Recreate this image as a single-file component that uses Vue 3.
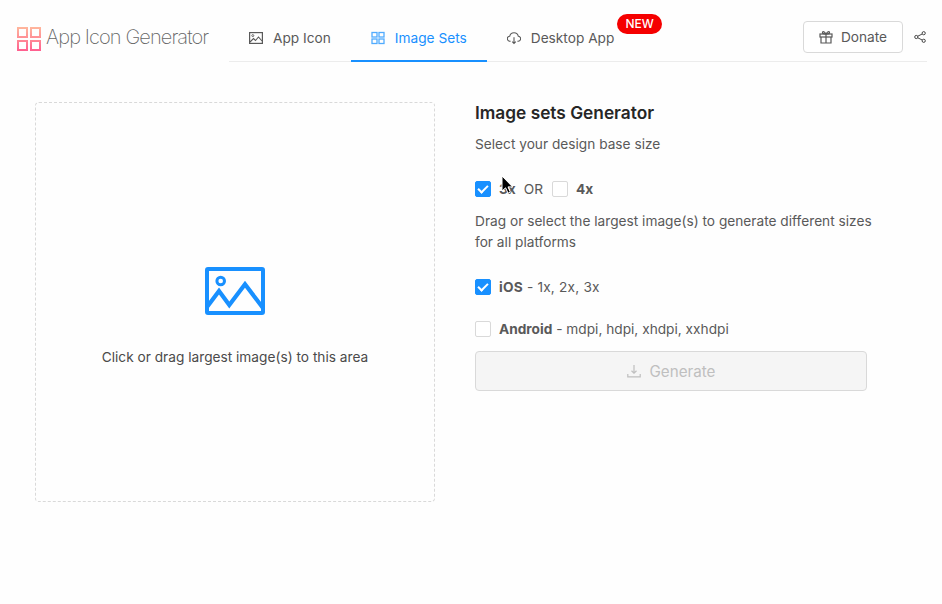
<script setup>
const tabs = [
  { label: 'App Icon', icon: 'picture' },
  { label: 'Image Sets', icon: 'grid', active: true },
  { label: 'Desktop App', icon: 'cloud', badge: 'NEW' },
]
</script>

<template>
  <div class="page">
    <header class="header">
      <div class="logo">
        <svg width="24" height="24" viewBox="0 0 24 24" fill="none" stroke="url(#lg)" stroke-width="2">
          <defs>
            <linearGradient id="lg" gradientUnits="userSpaceOnUse" x1="0" y1="0" x2="0" y2="24">
              <stop offset="0" stop-color="#ffb79c" />
              <stop offset="1" stop-color="#ff5f8f" />
            </linearGradient>
          </defs>
          <rect x="1" y="1" width="9" height="9" />
          <rect x="14" y="1" width="9" height="9" />
          <rect x="1" y="14" width="9" height="9" />
          <rect x="14" y="14" width="9" height="9" />
        </svg>
        <span class="logo-text">App Icon Generator</span>
      </div>
      <div class="nav">
        <div class="tabs">
          <div v-for="t in tabs" :key="t.label" class="tab" :class="{ active: t.active }">
            <svg v-if="t.icon === 'picture'" class="tab-icon" viewBox="0 0 14 14" fill="none" stroke="currentColor">
              <rect x="0.6" y="1.6" width="12.8" height="10.8" stroke-width="1.2" />
              <circle cx="3.8" cy="4.6" r="1" stroke-width="0.9" />
              <path d="M1 11 L4.5 7.5 L6.5 9.5 L9.5 6 L13 10" stroke-width="1.1" />
            </svg>
            <svg v-else-if="t.icon === 'grid'" class="tab-icon grid" viewBox="0 0 14 14" fill="none" stroke="currentColor" stroke-width="1.3">
              <rect x="1" y="1.5" width="5" height="4.5" />
              <rect x="8" y="1.5" width="5" height="4.5" />
              <rect x="1" y="8" width="5" height="4.5" />
              <rect x="8" y="8" width="5" height="4.5" />
            </svg>
            <svg v-else class="tab-icon" viewBox="0 0 14 14" fill="none" stroke="currentColor" stroke-width="1.1">
              <path d="M3.6 10.2 H3 A2.5 2.5 0 0 1 2.7 5.2 A4.4 4.4 0 0 1 11.3 5.2 A2.5 2.5 0 0 1 11 10.2 H10.4" />
              <path d="M7 6.2 V12.4 M5.2 10.6 L7 12.4 L8.8 10.6" />
            </svg>
            <span>{{ t.label }}</span>
            <span v-if="t.badge" class="badge">{{ t.badge }}</span>
          </div>
        </div>
        <button class="donate">
          <svg class="tab-icon" viewBox="0 0 14 14" fill="none" stroke="currentColor" stroke-width="1.2">
            <rect x="1" y="4" width="12" height="3" />
            <path d="M2 7 V13 H12 V7 M7 4 V13" />
            <path d="M7 4 C5 1 3 1.2 3.6 3 C3.8 3.7 5 4 7 4 C9 4 10.2 3.7 10.4 3 C11 1.2 9 1 7 4" />
          </svg>
          <span>Donate</span>
        </button>
        <svg class="share" viewBox="0 0 12 12" fill="none" stroke="#333" stroke-width="0.9">
          <circle cx="2.3" cy="6" r="1.6" />
          <circle cx="9.7" cy="2.2" r="1.6" />
          <circle cx="9.7" cy="9.8" r="1.6" />
          <path d="M3.8 5.2 L8.2 3 M3.8 6.8 L8.2 9" />
        </svg>
      </div>
    </header>

    <main class="main">
      <div class="drop">
        <svg class="drop-icon" viewBox="0 0 60 48" fill="none" stroke="#1890ff" stroke-width="4">
          <rect x="2" y="2" width="56" height="44" rx="1" />
          <circle cx="15.7" cy="14" r="3.8" stroke-width="3" />
          <path d="M2 40 L14 24 L24.3 38 L40 17.3 L58 41" stroke-width="4.2" />
        </svg>
        <p class="drop-text">Click or drag largest image(s) to this area</p>
      </div>

      <section class="panel">
        <h1 class="title">Image sets Generator</h1>
        <p class="sub">Select your design base size</p>
        <div class="row base">
          <span class="check on"></span><b class="lbl">3x</b>
          <span class="or">OR</span>
          <span class="check"></span><b class="lbl">4x</b>
        </div>
        <p class="desc">Drag or select the largest image(s) to generate different sizes<br />for all platforms</p>
        <div class="row ios">
          <span class="check on"></span><span class="lbl"><b>iOS</b> - 1x, 2x, 3x</span>
        </div>
        <div class="row android">
          <span class="check"></span><span class="lbl"><b>Android</b> - mdpi, hdpi, xhdpi, xxhdpi</span>
        </div>
        <button class="generate">
          <svg class="tab-icon" viewBox="0 0 14 14" fill="none" stroke="currentColor" stroke-width="1.2">
            <path d="M7 1 V9 M4.5 6.8 L7 9.2 L9.5 6.8" />
            <path d="M0.8 10 V12.8 H13.2 V10" />
          </svg>
          <span>Generate</span>
        </button>
      </section>
    </main>

    <svg class="cursor" width="13" height="20" viewBox="0 0 13 20">
      <path d="M1 1 V16 L4.6 12.8 L7 18.2 L9.4 17.2 L7 11.9 H11.6 Z" fill="#000" stroke="#fff" stroke-width="1" />
    </svg>
  </div>
</template>

<style scoped>
.page {
  position: relative;
  width: 942px;
  height: 604px;
  overflow: hidden;
  background: #fefefe;
  color: #595959;
  font-family: Inter, "Liberation Sans", sans-serif;
  font-size: 13.7px;
}
.header {
  display: flex;
  height: 62px;
}
.logo {
  width: 229px;
  display: flex;
  align-items: center;
  gap: 5px;
  padding: 15px 0 0 17px;
  box-sizing: border-box;
}
.logo-text {
  font-size: 20px;
  font-weight: 200;
  color: #666;
  letter-spacing: -0.9px;
  white-space: nowrap;
  margin-top: -3px;
}
.nav {
  width: 698px;
  display: flex;
  align-items: stretch;
  border-bottom: 1px solid #ececec;
  box-sizing: border-box;
}
.tabs {
  display: flex;
  flex: 1;
}
.tab {
  position: relative;
  display: flex;
  align-items: center;
  gap: 10px;
  padding: 13px 20px 0;
  box-sizing: border-box;
  height: 62px;
  white-space: nowrap;
}
.tab.active {
  color: #1890ff;
}
.tab.active::after {
  content: "";
  position: absolute;
  left: 0;
  right: 0;
  bottom: 0;
  height: 2px;
  background: #1890ff;
}
.tab-icon {
  width: 14px;
  height: 14px;
  flex: none;
}
.grid {
  opacity: 0.75;
}
.badge {
  position: absolute;
  top: 14px;
  right: -28px;
  height: 20px;
  padding: 0 8.5px;
  border-radius: 10px;
  background: #f50000;
  color: #fff;
  font-size: 12px;
  font-weight: 500;
  line-height: 20px;
}
.donate {
  align-self: flex-start;
  margin-top: 21px;
  width: 100px;
  height: 32px;
  display: flex;
  align-items: center;
  justify-content: center;
  gap: 8px;
  background: #fff;
  border: 1px solid #d9d9d9;
  border-radius: 4px;
  color: #595959;
  font: inherit;
  padding: 0;
}
.share {
  align-self: flex-start;
  width: 12px;
  height: 12px;
  margin: 31px 1px 0 11px;
}
.main {
  display: flex;
  padding: 40px 0 0 35px;
  gap: 40px;
}
.drop {
  width: 400px;
  height: 400px;
  box-sizing: border-box;
  border: 1px dashed #d9d9d9;
  border-radius: 4px;
  display: flex;
  flex-direction: column;
  align-items: center;
  padding-top: 164px;
}
.drop-icon {
  width: 60px;
  height: 48px;
}
.drop-text {
  margin: 32px 0 0;
  line-height: 20px;
  color: #4a4a4a;
}
.panel {
  width: 400px;
}
.title {
  margin: 0;
  padding-top: 1px;
  font-size: 17.3px;
  line-height: 20px;
  font-weight: 600;
  color: #262626;
}
.sub {
  margin: 11px 0 0;
  line-height: 20px;
}
.row {
  display: flex;
  align-items: center;
  height: 20px;
}
.base {
  margin-top: 25px;
}
.check {
  position: relative;
  width: 16px;
  height: 16px;
  box-sizing: border-box;
  border: 1px solid #d9d9d9;
  border-radius: 2px;
  background: #fff;
  flex: none;
  margin-right: 8px;
}
.check.on {
  background: #1890ff;
  border-color: #1890ff;
}
.check.on::after {
  content: "";
  position: absolute;
  left: 4px;
  top: 1px;
  width: 4px;
  height: 8px;
  border: solid #fff;
  border-width: 0 2px 2px 0;
  transform: rotate(45deg);
}
.lbl b, b.lbl {
  font-weight: 700;
}
.or {
  margin: 0 9px 0 8px;
}
.desc {
  margin: 12px 0 0;
  width: 420px;
  line-height: 21px;
}
.ios {
  margin-top: 24px;
  letter-spacing: 0.2px;
}
.android {
  margin-top: 22px;
}
.generate {
  margin-top: 12px;
  width: 392px;
  height: 40px;
  display: flex;
  align-items: center;
  justify-content: center;
  gap: 9px;
  background: #f5f5f5;
  border: 1px solid #d9d9d9;
  border-radius: 4px;
  color: #bfbfbf;
  font: inherit;
  font-size: 15.2px;
  padding: 0;
}
.cursor {
  position: absolute;
  left: 501px;
  top: 175px;
}
</style>

<style>
body { background: #fefefe; }
</style>
